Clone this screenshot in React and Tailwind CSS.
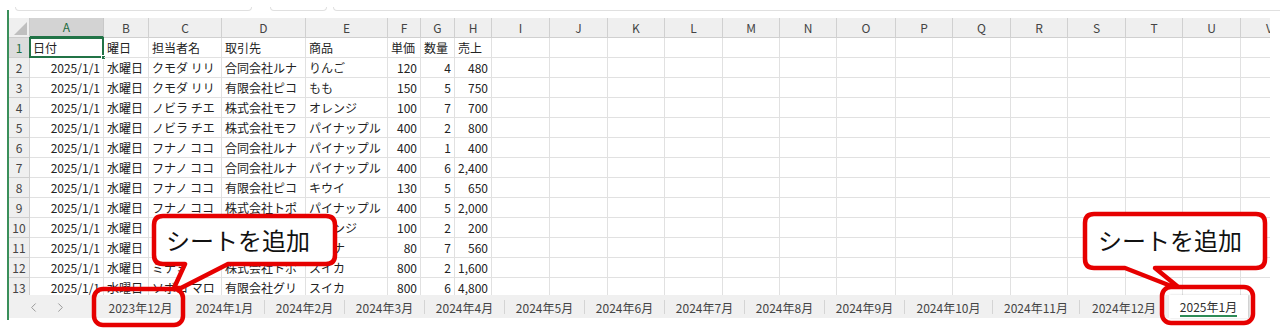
import { ChevronLeft, ChevronRight } from "lucide-react";

const cols = [
  { key: "A", w: 74 },
  { key: "B", w: 45 },
  { key: "C", w: 73 },
  { key: "D", w: 84 },
  { key: "E", w: 82 },
  { key: "F", w: 33 },
  { key: "G", w: 34 },
  { key: "H", w: 37 },
  { key: "I", w: 58 },
  { key: "J", w: 58 },
  { key: "K", w: 57 },
  { key: "L", w: 58 },
  { key: "M", w: 57 },
  { key: "N", w: 57 },
  { key: "O", w: 59 },
  { key: "P", w: 57 },
  { key: "Q", w: 58 },
  { key: "R", w: 57 },
  { key: "S", w: 58 },
  { key: "T", w: 57 },
  { key: "U", w: 58 },
  { key: "V", w: 58 },
];

const head = ["日付", "曜日", "担当者名", "取引先", "商品", "単価", "数量", "売上"];

const rows = [
  ["クモダ リリ", "合同会社ルナ", "りんご", "120", "4", "480"],
  ["クモダ リリ", "有限会社ピコ", "もも", "150", "5", "750"],
  ["ノビラ チエ", "株式会社モフ", "オレンジ", "100", "7", "700"],
  ["ノビラ チエ", "株式会社モフ", "パイナップル", "400", "2", "800"],
  ["フナノ ココ", "合同会社ルナ", "パイナップル", "400", "1", "400"],
  ["フナノ ココ", "合同会社ルナ", "パイナップル", "400", "6", "2,400"],
  ["フナノ ココ", "有限会社ピコ", "キウイ", "130", "5", "650"],
  ["フナノ ココ", "株式会社トポ", "パイナップル", "400", "5", "2,000"],
  ["ミナミ ハナ", "株式会社モフ", "オレンジ", "100", "2", "200"],
  ["ミナミ ハナ", "有限会社ピコ", "バナナ", "80", "7", "560"],
  ["ミナミ ハナ", "株式会社トポ", "スイカ", "800", "2", "1,600"],
  ["ソボロ マロ", "有限会社グリ", "スイカ", "800", "6", "4,800"],
];

const tabs = [
  { label: "2023年12月", w: 88 },
  { label: "2024年1月", w: 80 },
  { label: "2024年2月", w: 80 },
  { label: "2024年3月", w: 80 },
  { label: "2024年4月", w: 80 },
  { label: "2024年5月", w: 80 },
  { label: "2024年6月", w: 80 },
  { label: "2024年7月", w: 80 },
  { label: "2024年8月", w: 80 },
  { label: "2024年9月", w: 80 },
  { label: "2024年10月", w: 88 },
  { label: "2024年11月", w: 87 },
  { label: "2024年12月", w: 88 },
];

const Cell = ({ w, right, children, className = "" }) => (
  <div
    style={{ width: w }}
    className={`h-[20px] shrink-0 border-r border-b border-[#e1e1e1] px-[3px] text-[12px] leading-[19px] text-[#222] whitespace-nowrap overflow-hidden ${
      right ? "text-right" : "text-left"
    } ${className}`}
  >
    {children}
  </div>
);

const HeaderRow = () => (
  <div className="flex h-[20px]">
    <div className="relative w-[21px] shrink-0 border-r border-b border-[#cbcbcb] bg-[#efefef]">
      <svg className="absolute right-[2px] bottom-[2px]" width="13" height="13">
        <polygon points="13,0 13,13 0,13" fill="#bfbfbf" />
      </svg>
    </div>
    {cols.map((c) =>
      c.key === "A" ? (
        <div
          key={c.key}
          style={{ width: c.w }}
          className="shrink-0 flex items-center justify-center border-r border-[#c8c8c8] border-b-2 border-b-[#217346] bg-[#d3d3d3] text-[12px] text-[#1d6b3f]"
        >
          {c.key}
        </div>
      ) : (
        <div
          key={c.key}
          style={{ width: c.w }}
          className="shrink-0 flex items-center justify-center border-r border-b border-[#d0d0d0] bg-[#efefef] text-[12px] text-[#444]"
        >
          {c.key}
        </div>
      )
    )}
  </div>
);

const RowHead = ({ n, active }) => (
  <div
    className={`w-[21px] h-[20px] shrink-0 flex items-center justify-center border-r border-b border-[#cfcfcf] text-[12px] ${
      active ? "bg-[#dcdcdc] text-[#1d6b3f]" : "bg-[#efefef] text-[#444]"
    }`}
  >
    {n}
  </div>
);

const Empty = () =>
  cols.slice(8).map((c) => <Cell key={c.key} w={c.w} />);

const Grid = () => (
  <div className="h-[277px] overflow-hidden">
    <HeaderRow />
    <div className="flex">
      <RowHead n={1} active />
      {head.map((h, i) => (
        <div key={h} className="relative">
          <Cell w={cols[i].w}>{h}</Cell>
          {i === 0 && (
            <div className="absolute -left-[1px] -top-[1px] w-[75px] h-[21px] border-2 border-[#217346]">
              <div className="absolute -right-[4px] -bottom-[4px] w-[5px] h-[5px] bg-[#217346] border border-white" />
            </div>
          )}
        </div>
      ))}
      <Empty />
    </div>
    {rows.map((r, i) => (
      <div key={i} className="flex">
        <RowHead n={i + 2} />
        <Cell w={cols[0].w} right>
          2025/1/1
        </Cell>
        <Cell w={cols[1].w}>水曜日</Cell>
        <Cell w={cols[2].w}>{r[0]}</Cell>
        <Cell w={cols[3].w}>{r[1]}</Cell>
        <Cell w={cols[4].w}>{r[2]}</Cell>
        <Cell w={cols[5].w} right>
          {r[3]}
        </Cell>
        <Cell w={cols[6].w} right>
          {r[4]}
        </Cell>
        <Cell w={cols[7].w} right>
          {r[5]}
        </Cell>
        <Empty />
      </div>
    ))}
  </div>
);

const TabBar = () => (
  <div className="flex h-[23px] w-[1241px] bg-[#f0f0f0] items-center text-[12px] text-[#444]">
    <div className="w-[88px] shrink-0 flex items-center pl-[17px] pt-[2px] gap-[12px] text-[#9a9a9a]">
      <ChevronLeft size={15} strokeWidth={1.6} />
      <ChevronRight size={15} strokeWidth={1.6} />
    </div>
    {tabs.map((t, i) => (
      <div key={t.label} style={{ width: t.w }} className="shrink-0 flex items-center h-full">
        <div className="flex-1 text-center pt-[3px]">{t.label}</div>
        {i < tabs.length - 1 && <div className="w-px h-[14px] bg-[#d4d4d4]" />}
      </div>
    ))}
    <div className="w-[79px] h-full shrink-0 ml-[1px] bg-white shadow-[1px_0_2px_rgba(0,0,0,0.18)] flex items-center justify-center">
      <span className="mt-[3px] pb-[1px] border-b-2 border-[#2e8b57] leading-[15px] text-[#2f2f2f]">
        2025年1月
      </span>
    </div>
  </div>
);

const Callouts = () => (
  <svg className="absolute left-0 top-0 pointer-events-none" width="1280" height="335">
    <g fill="white" stroke="#e60000" strokeWidth="4.5" strokeLinejoin="round">
      <rect x="94" y="289" width="89" height="36" rx="9" fill="none" />
      <path d="M163,216 H326 Q335,216 335,225 V255 Q335,264 326,264 H228 L181,288 L174,288 L185,264 H163 Q154,264 154,255 V225 Q154,216 163,216 Z" />
      <rect x="1162" y="287" width="91" height="36" rx="9" fill="none" />
      <path d="M1094,214 H1256 Q1265,214 1265,223 V259 Q1265,268 1256,268 H1155 L1177,286 L1171,286 L1125,268 H1094 Q1085,268 1085,259 V223 Q1085,214 1094,214 Z" />
    </g>
    <g fill="#111" fontSize="24" fontFamily="'Noto Sans CJK JP', sans-serif">
      <text x="166" y="250">シートを追加</text>
      <text x="1098" y="250">シートを追加</text>
    </g>
  </svg>
);

export default function App() {
  return (
    <div className="relative w-[1280px] h-[335px] bg-white overflow-hidden font-['Noto_Sans_CJK_JP',sans-serif]">
      {/* formula bar remnants */}
      <div className="flex h-[10px]">
        <div className="ml-[15px] mt-[7px] w-[237px] h-[4px] border-x border-b border-[#e0e0e0] rounded-b-[4px]" />
        <div className="ml-[18px] mt-[7px] w-[57px] h-[4px] border-x border-b border-[#e0e0e0] rounded-b-[4px]" />
        <div className="ml-[6px] mt-[7px] flex-1 h-[4px] border-l border-b border-[#e0e0e0] rounded-bl-[4px]" />
      </div>
      <div className="ml-[7px] w-[1263px] border-l-2 border-[#3a8f5a] pt-[8px] pb-[2px] overflow-hidden">
        <Grid />
        <TabBar />
      </div>
      <Callouts />
    </div>
  );
}
